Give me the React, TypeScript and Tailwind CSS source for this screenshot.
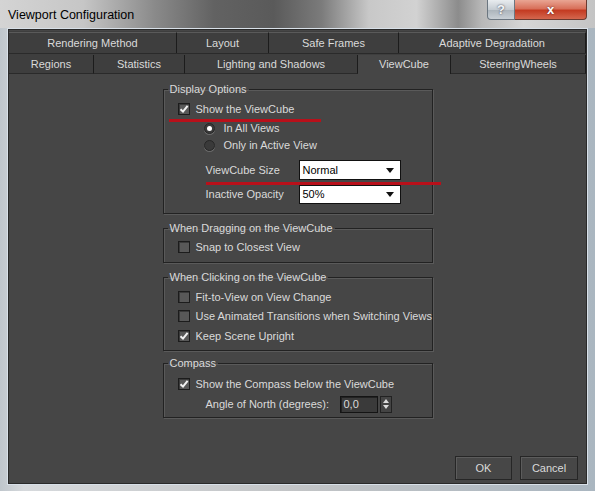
import React from "react";

const font = "font-['Liberation_Sans',Arial,sans-serif]";

function CheckBox({ checked }: { checked?: boolean }) {
  return (
    <span className="flex h-[12px] w-[12px] shrink-0 items-center justify-center border border-[#1c1c1c] bg-[#585858] shadow-[inset_1px_1px_0_#3a3a3a]">
      {checked && (
        <svg width="10" height="10" viewBox="0 0 10 10">
          <path d="M1.5 5.2 L4 7.6 L8.6 1.8" fill="none" stroke="#f2f2f2" strokeWidth="2" />
        </svg>
      )}
    </span>
  );
}

function Radio({ on }: { on?: boolean }) {
  return (
    <span className="flex h-[11px] w-[11px] shrink-0 items-center justify-center rounded-full border border-[#262626] bg-[#3a3a3a] shadow-[0_1px_0_#6a6a6a]">
      {on && <span className="h-[5px] w-[5px] rounded-full bg-white" />}
    </span>
  );
}

function Check({ label, checked, className = "" }: { label: string; checked?: boolean; className?: string }) {
  return (
    <div className={"flex h-[18px] items-center gap-[6px] whitespace-nowrap pl-[14px] " + className}>
      <CheckBox checked={checked} />
      <span>{label}</span>
    </div>
  );
}

function Dropdown({ value }: { value: string }) {
  return (
    <div className="flex h-full w-[102px] items-center justify-between border border-[#111] bg-white pl-[3px] pr-[6px] text-black">
      <span>{value}</span>
      <svg width="8" height="5" viewBox="0 0 8 5">
        <path d="M0 0 H8 L4 5 Z" fill="#111" />
      </svg>
    </div>
  );
}

function Group({ title, children, className = "" }: { title: string; children: React.ReactNode; className?: string }) {
  return (
    <fieldset className={"border border-[#222] shadow-[inset_1px_1px_0_#5a5a5a,1px_1px_0_#5a5a5a] " + className}>
      <legend className="ml-[4px] px-[2px] leading-[14px]">{title}</legend>
      {children}
    </fieldset>
  );
}

const row1 = [
  { t: "Rendering Method", w: "w-[168px]" },
  { t: "Layout", w: "w-[92px]" },
  { t: "Safe Frames", w: "w-[130px]" },
  { t: "Adaptive Degradation", w: "flex-1" },
];
const row2 = [
  { t: "Regions", w: "w-[85px]" },
  { t: "Statistics", w: "w-[91px]" },
  { t: "Lighting and Shadows", w: "w-[173px]" },
  { t: "ViewCube", w: "w-[93px]", active: true },
  { t: "SteeringWheels", w: "flex-1" },
];

export default function App() {
  return (
    <div
      className={
        "flex h-[491px] w-[595px] flex-col overflow-hidden whitespace-nowrap text-[11px] text-[#dadada] " +
        font +
        " bg-[linear-gradient(90deg,#bfc6cc_0%,#d6d9dc_4%,#c2c4c6_50%,#aab6c0_100%)]"
      }
    >
      {/* title bar */}
      <div className="flex h-[28px] shrink-0 items-start bg-[linear-gradient(90deg,#d4d4d4_0%,#c6c6c6_14%,#8a8a8a_26%,#626262_36%,#5a5a5a_46%,#7b7b7b_54%,#c8c8c8_62%,#d2d2d2_70%,#8c8c8c_77%,#b8b8b8_81%,#d6d6d6_88%,#c4c4c4_100%)]">
        <div className="pl-[8px] pt-[7px] text-[12.5px] leading-[16px] text-black">Viewport Configuration</div>
        <div className="ml-auto mr-[8px] flex h-[20px]">
          <div className="flex w-[28px] items-center justify-center rounded-bl-[4px] border border-t-0 border-[#6b7680] bg-[linear-gradient(180deg,#e8ecef_0%,#c5ccd2_50%,#aab3ba_51%,#c9d0d6_100%)] text-[13px] font-bold text-[#f4f6f8] [text-shadow:0_0_2px_#334]">
            ?
          </div>
          <div className="flex w-[72px] items-center justify-center rounded-br-[4px] border border-l-0 border-t-0 border-[#6b3a30] bg-[linear-gradient(180deg,#e9a593_0%,#d8705a_45%,#c43b22_55%,#d4674e_100%)] text-[13px] font-bold text-white [text-shadow:0_0_2px_#422]">
            x
          </div>
        </div>
      </div>

      {/* client area */}
      <div className="mx-[7px] flex flex-1 flex-col border border-[#d8e0e8] bg-[#464646] shadow-[inset_0_0_0_1px_#2a2a2a]">
        {/* tabs */}
        <div className="mx-[1px] mt-[2px] flex h-[22px] bg-[#3e3e3e] pt-[1px]">
          {row1.map((t) => (
            <div
              key={t.t}
              className={"flex items-center justify-center border-r border-t border-r-[#1c1c1c] border-t-[#5a5a5a] " + t.w}
            >
              {t.t}
            </div>
          ))}
        </div>
        <div className="mx-[1px] flex h-[21px] border-t border-[#2a2a2a] bg-[#3e3e3e] pt-[1px]">
          {row2.map((t) => (
            <div
              key={t.t}
              className={
                "flex items-center justify-center border-r border-r-[#1c1c1c] " +
                t.w +
                (t.active ? " bg-[#464646]" : " border-b border-b-[#2a2a2a]")
              }
            >
              {t.t}
            </div>
          ))}
        </div>

        <div className="mx-auto mt-[8px] flex w-[270px] flex-col">
          <Group title="Display Options" className="pb-[9px]">
            <div className="relative pt-[4px]">
              <Check label="Show the ViewCube" checked />
              <div className="absolute left-[5px] top-[23px] h-[3px] w-[152px] bg-[#b8101a]" />
            </div>
            <div className="mt-[1px] flex h-[18px] items-center gap-[9px] pl-[40px]">
              <Radio on />
              <span>In All Views</span>
            </div>
            <div className="flex h-[16px] items-center gap-[9px] pl-[40px]">
              <Radio />
              <span>Only in Active View</span>
            </div>
            <div className="relative mt-[7px] flex h-[20px] items-center pl-[42px]">
              <span className="w-[93px]">ViewCube Size</span>
              <Dropdown value="Normal" />
              <div className="absolute left-[42px] top-[22px] h-[3px] w-[235px] bg-[#b8101a]" />
            </div>
            <div className="mt-[5px] flex h-[19px] items-center pl-[42px]">
              <span className="w-[93px]">Inactive Opacity</span>
              <Dropdown value="50%" />
            </div>
          </Group>

          <Group title="When Dragging on the ViewCube" className="mt-[7px] pb-[6px]">
            <Check label="Snap to Closest View" className="mt-[3px]" />
          </Group>

          <Group title="When Clicking on the ViewCube" className="mt-[7px] pb-[5px]">
            <Check label="Fit-to-View on View Change" className="mt-[4px]" />
            <Check label="Use Animated Transitions when Switching Views" className="mt-[1px]" />
            <Check label="Keep Scene Upright" checked className="mt-[2px]" />
          </Group>

          <Group title="Compass" className="mt-[5px] pb-[4px]">
            <Check label="Show the Compass below the ViewCube" checked className="mt-[5px]" />
            <div className="mt-[2px] flex h-[18px] items-center pl-[42px]">
              <span className="w-[134px]">Angle of North (degrees):</span>
              <div className="flex h-[17px] w-[38px] items-center border border-[#141414] bg-[#3a3a3a] pl-[3px] shadow-[inset_1px_1px_0_#222]">
                0,0
              </div>
              <div className="ml-[2px] flex h-[17px] w-[12px] flex-col items-center justify-center gap-[2px] border border-[#222] bg-[#444]">
                <svg width="6" height="4" viewBox="0 0 6 4">
                  <path d="M0 4 L3 0 L6 4 Z" fill="#dcdcdc" />
                </svg>
                <svg width="6" height="4" viewBox="0 0 6 4">
                  <path d="M0 0 H6 L3 4 Z" fill="#dcdcdc" />
                </svg>
              </div>
            </div>
          </Group>
        </div>

        <div className="mb-[4px] mr-[9px] mt-auto flex justify-end gap-[8px]">
          <button className="flex h-[24px] w-[57px] items-center justify-center border border-[#262626] bg-[#474747] shadow-[inset_1px_1px_0_#5c5c5c]">
            OK
          </button>
          <button className="flex h-[24px] w-[58px] items-center justify-center border border-[#262626] bg-[#474747] shadow-[inset_1px_1px_0_#5c5c5c]">
            Cancel
          </button>
        </div>
      </div>
      <div className="h-[6px] shrink-0" />
    </div>
  );
}
